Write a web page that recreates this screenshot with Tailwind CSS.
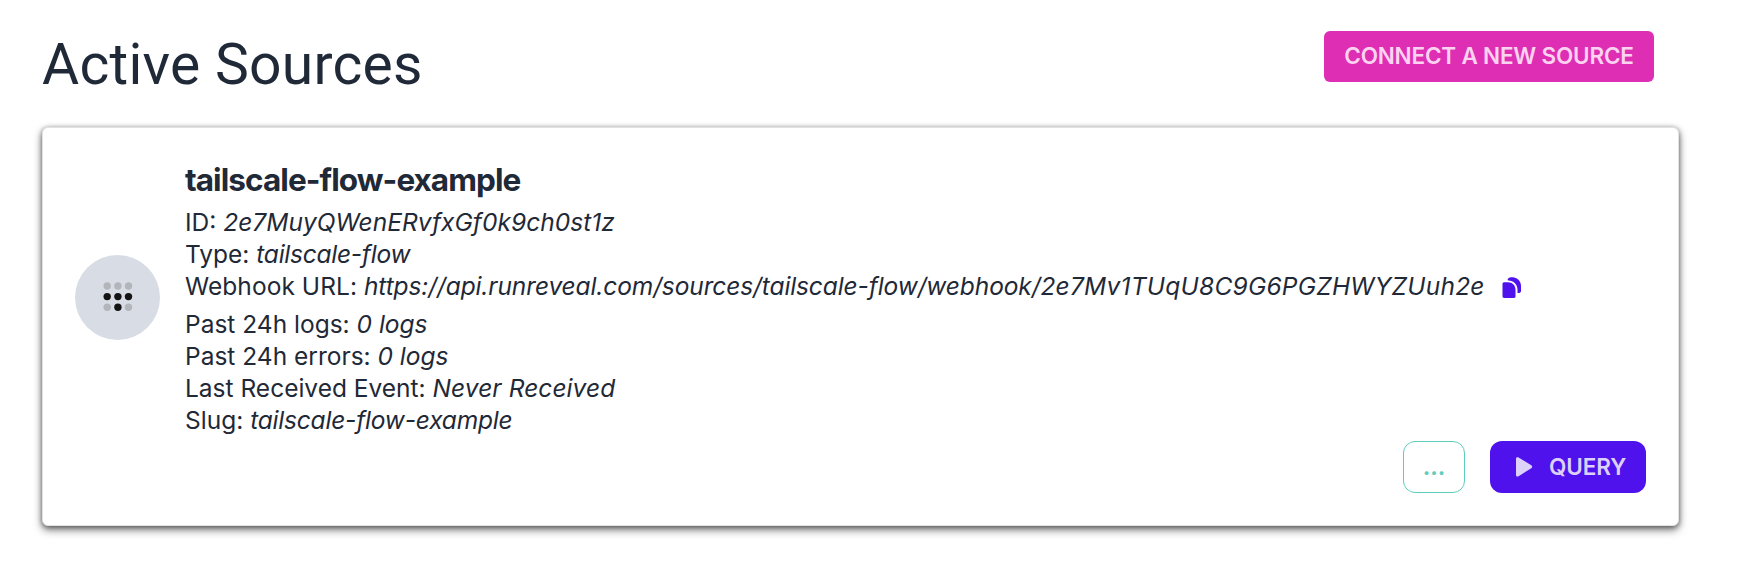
<!DOCTYPE html>
<html lang="en">
<head>
<meta charset="utf-8">
<title>Active Sources</title>
<script src="https://cdn.jsdelivr.net/npm/@tailwindcss/browser@4"></script>
</head>
<body class="bg-white text-[#1f2937] font-['Inter',sans-serif] h-[572px] overflow-hidden">
<main class="pl-[42px] pr-[63px] pt-[31px]">
  <header class="flex items-start justify-between pr-[25px] h-24">
    <h1 class="pt-[2px] font-['Roboto',sans-serif] text-[57px] leading-[64px] whitespace-nowrap tracking-[0.25px]">Active Sources</h1>
    <button class="w-[330px] h-[51px] pb-[2px] rounded-md bg-[#de2eb3] text-[#fbd3f1] text-[22.5px] font-semibold whitespace-nowrap tracking-[-0.2px]">CONNECT A NEW SOURCE</button>
  </header>
  <section class="h-[399px] rounded-md bg-white border border-[#e2e2e2] shadow-[0_4px_8px_rgba(0,0,0,0.5),0_1px_5px_rgba(0,0,0,0.4)] flex flex-col">
    <div class="flex pl-[32px] pt-[32px]">
      <div class="mt-[95px] w-[85px] h-[85px] shrink-0 rounded-full bg-[#d8dce4] flex items-center justify-center">
        <svg class="-mt-px" width="30" height="30" viewBox="0 0 30 30" fill="#141414">
          <g fill="#b2b5ba"><circle cx="4.200" cy="4" r="3.700"/><circle cx="14.900" cy="4" r="3.700"/><circle cx="25.500" cy="4" r="3.700"/><circle cx="4.200" cy="25.300" r="3.700"/><circle cx="25.500" cy="25.300" r="3.700"/></g>
          <circle cx="4.200" cy="14.600" r="3.700"/><circle cx="14.900" cy="14.600" r="3.700"/><circle cx="25.500" cy="14.600" r="3.700"/><circle cx="14.900" cy="25.300" r="3.700"/>
        </svg>
      </div>
      <div class="ml-[25px] text-[24.5px] leading-8 whitespace-nowrap">
        <h2 class="text-[31.5px] leading-[40px] font-bold mb-[6px] tracking-[-0.93px]">tailscale-flow-example</h2>
        <p>ID: <em class="tracking-[0.04px]">2e7MuyQWenERvfxGf0k9ch0st1z</em></p>
        <p>Type: <em class="tracking-[-0.25px]">tailscale-flow</em></p>
        <p class="flex items-center h-8 mb-[6px]"><span class="whitespace-pre tracking-[0.06px]">Webhook URL: </span><em><span class="tracking-[-0.11px]">https://api.runreveal.com/sources/tailscale-flow/webhook/</span><span class="tracking-[0.24px]">2e7Mv1TUqU8C9G6PGZHWYZUuh2e</span></em>
          <svg class="ml-[17px] mt-[3px]" width="20" height="22" viewBox="0 0 20 22" fill="#4f12ec"><path d="M2 5.200H6C10.500 5.200 13.500 8.500 13.500 13V19.300C13.500 20.300 13 21 12 21H2.200C1.200 21 .5 20.300 .5 19.300V7C.5 6 1 5.200 2 5.200Z"/><path d="M5.500 3C6 1.200 7.200 .3 9 .3H10.500C15 .3 19 4 19 8.800V14C19 15.500 17.500 16.200 15.500 16V12.500C15.500 7.500 11.500 3.500 6.500 3.500Z"/></svg>
        </p>
        <p>Past 24h logs: <em>0 logs</em></p>
        <p>Past 24h errors: <em>0 logs</em></p>
        <p>Last Received Event: <em class="tracking-[0.08px]">Never Received</em></p>
        <p>Slug: <em class="tracking-[-0.2px]">tailscale-flow-example</em></p>
      </div>
    </div>
    <div class="mt-[5px] flex justify-end gap-[25px] pr-[32px]">
      <button class="w-[62px] h-[52px] rounded-xl border border-[#5fcdbd] text-[#5fcdbd] text-[22.5px] font-bold">...</button>
      <button class="w-[156px] h-[52px] rounded-xl bg-[#4f12ec] text-[#ddd0fb] text-[22.5px] font-semibold flex items-center pl-[26px] tracking-[-0.1px]">
        <svg class="mr-[16px]" width="17" height="20" viewBox="0 0 17 20" fill="currentColor"><path d="M0 1.800C0 .3 1.500 0 2.600 .6L15.300 8.300C16.500 9 16.500 10.500 15.300 11.200L2.600 19.200C1.500 19.900 0 19.500 0 18Z"/></svg><span>QUERY</span>
      </button>
    </div>
  </section>
</main>
</body>
</html>
